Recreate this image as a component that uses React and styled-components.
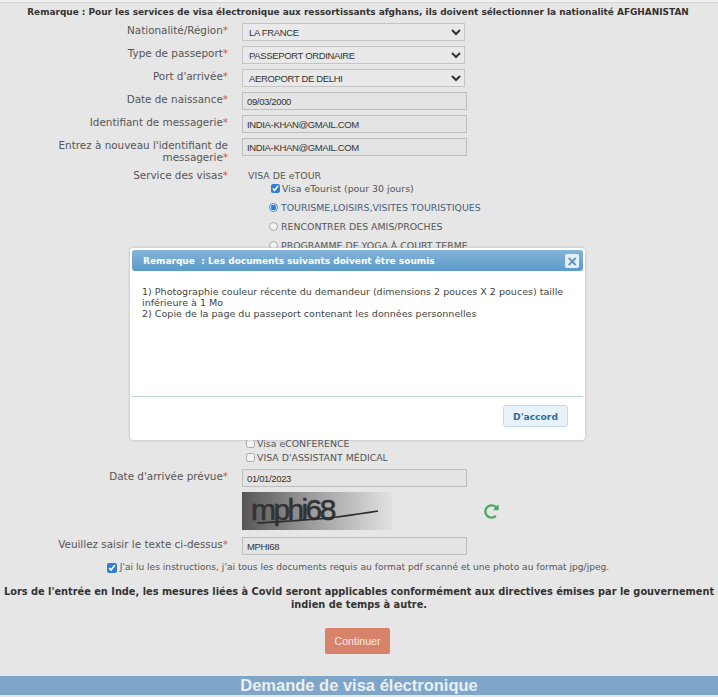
import React from "react";
import styled, { createGlobalStyle } from "styled-components";
import { FaRedoAlt } from "react-icons/fa";

const GlobalStyle = createGlobalStyle`
	html, body {
		margin: 0;
		padding: 0;
		background: #e6e6e6;
	}
	* {
		box-sizing: border-box;
	}
`;

const rows = [
	{ label: "Nationalité/Région", type: "select", value: "LA FRANCE" },
	{ label: "Type de passeport", type: "select", value: "PASSEPORT ORDINAIRE" },
	{ label: "Port d'arrivée", type: "select", value: "AEROPORT DE DELHI" },
	{ label: "Date de naissance", type: "input", value: "09/03/2000" },
	{ label: "Identifiant de messagerie", type: "input", value: "INDIA-KHAN@GMAIL.COM" },
	{ label: "Entrez à nouveau l'identifiant de messagerie", type: "input", value: "INDIA-KHAN@GMAIL.COM" },
];

const Field = ({ row }) => (
	<Row>
		<Label>
			{row.label}
			<Star>*</Star>
		</Label>
		{row.type === "select" ? (
			<Select defaultValue={row.value}>
				<option>{row.value}</option>
			</Select>
		) : (
			<Input defaultValue={row.value} />
		)}
	</Row>
);

const App = () => {
	return (
		<Page>
			<GlobalStyle />
			<TopLine />
			<Notice>
				Remarque : Pour les services de visa électronique aux ressortissants afghans, ils doivent sélectionner la
				nationalité AFGHANISTAN
			</Notice>
			<Fields>
				{rows.map((row) => (
					<Field key={row.label} row={row} />
				))}
			</Fields>
			<ServiceRow>
				<Label>
					Service des visas<Star>*</Star>
				</Label>
				<ServiceBody>
					<ServiceTitle>VISA DE eTOUR</ServiceTitle>
					<CheckLine>
						<input type="checkbox" defaultChecked />
						Visa eTourist (pour 30 jours)
					</CheckLine>
					<RadioLine $active>
						<input type="radio" name="purpose" defaultChecked />
						TOURISME,LOISIRS,VISITES TOURISTIQUES
					</RadioLine>
					<RadioLine>
						<input type="radio" name="purpose" />
						RENCONTRER DES AMIS/PROCHES
					</RadioLine>
					<RadioLine>
						<input type="radio" name="purpose" />
						PROGRAMME DE YOGA À COURT TERME
					</RadioLine>
					<HiddenOptions />
					<OtherVisa>
						<input type="checkbox" />
						Visa eCONFERENCE
					</OtherVisa>
					<OtherVisa>
						<input type="checkbox" />
						VISA D'ASSISTANT MÉDICAL
					</OtherVisa>
				</ServiceBody>
			</ServiceRow>
			<DateRow>
				<Label>
					Date d'arrivée prévue<Star>*</Star>
				</Label>
				<Input defaultValue="01/01/2023" />
			</DateRow>
			<CaptchaRow>
				<Captcha>
					<CaptchaText>mphi68</CaptchaText>
					<CaptchaStrike viewBox="0 0 150 38">
						<path d="M15 31 C45 29 72 28 95 25 C110 23 124 21 136 19" fill="none" stroke="#2c2c2c" strokeWidth="1.7" />
					</CaptchaStrike>
				</Captcha>
				<Refresh>
					<FaRedoAlt />
				</Refresh>
			</CaptchaRow>
			<Row>
				<Label>
					Veuillez saisir le texte ci-dessus<Star>*</Star>
				</Label>
				<Input defaultValue="MPHI68" />
			</Row>
			<Agree>
				<input type="checkbox" defaultChecked />
				J'ai lu les instructions, j'ai tous les documents requis au format pdf scanné et une photo au format jpg/jpeg.
			</Agree>
			<Covid>
				Lors de l'entrée en Inde, les mesures liées à Covid seront applicables conformément aux directives émises par le
				gouvernement indien de temps à autre.
			</Covid>
			<Actions>
				<Continue>Continuer</Continue>
			</Actions>
			<Banner>Demande de visa électronique</Banner>

			<Modal>
				<ModalHead>
					<ModalTitle>Remarque  : Les documents suivants doivent être soumis</ModalTitle>
					<Close>×</Close>
				</ModalHead>
				<ModalBody>
					1) Photographie couleur récente du demandeur (dimensions 2 pouces X 2 pouces) taille inférieure à 1 Mo
					<br />
					2) Copie de la page du passeport contenant les données personnelles
				</ModalBody>
				<ModalFoot>
					<Okay>D'accord</Okay>
				</ModalFoot>
			</Modal>
		</Page>
	);
};

const Page = styled.div`
	position: relative;
	width: 718px;
	height: 697px;
	overflow: hidden;
	background: #e6e6e6;
	border-top: 2px solid #f2f2f2;
	font-family: "DejaVu Sans", Verdana, sans-serif;
	font-size: 10px;
	color: #555;
`;

const TopLine = styled.div`
	height: 1px;
	background: #d4d4d4;
`;

const Notice = styled.div`
	text-align: center;
	font-weight: 700;
	font-size: 8.95px;
	line-height: 12px;
	color: #333;
	padding: 3px 2px 5px 0;
`;

const Fields = styled.div`
	display: flex;
	flex-direction: column;
	gap: 5px;
`;

const Row = styled.div`
	display: flex;
	align-items: flex-start;
	gap: 14px;
`;

const Label = styled.label`
	flex: 0 0 228px;
	text-align: right;
	font-size: 10.4px;
	line-height: 12px;
	padding-top: 1px;
	padding-left: 50px;
`;

const Star = styled.span`
	color: #d9534f;
`;

const Select = styled.select`
	width: 223px;
	height: 18px;
	padding: 0 0 0 2px;
	border: 1px solid #c4c4c4;
	background-color: #e9e9e9;
	font-family: "Liberation Sans", Arial, sans-serif;
	font-size: 9.5px;
	letter-spacing: -0.35px;
	color: #333;
`;

const Input = styled.input`
	width: 225px;
	height: 18px;
	padding: 0 4px;
	border: 1px solid #bdbdbd;
	background: #e4e4e4;
	font-family: "Liberation Sans", Arial, sans-serif;
	font-size: 9.5px;
	letter-spacing: -0.35px;
	color: #333;
`;

const ServiceRow = styled(Row)`
	margin-top: 5px;
`;

const ServiceBody = styled.div`
	display: flex;
	flex-direction: column;
	padding-left: 3px;
	font-size: 9.4px;
`;

const ServiceTitle = styled.div`
	line-height: 12px;
	padding: 2px 0 0 3px;
`;

const CheckLine = styled.label`
	display: flex;
	align-items: center;
	gap: 2px;
	height: 13px;
	margin: 0 0 3px 26px;
	input {
		margin: 0;
		width: 9px;
		height: 9px;
		accent-color: #2f7fd6;
	}
`;

const RadioLine = styled.label`
	display: flex;
	align-items: center;
	gap: 3px;
	height: 19px;
	margin-left: 24px;
	color: ${(p) => (p.$active ? "#46607a" : "#555")};
	input {
		margin: 0;
		width: 9px;
		height: 9px;
		accent-color: #2f7fd6;
		opacity: ${(p) => (p.$active ? 1 : 0.55)};
	}
`;

const HiddenOptions = styled.div`
	height: 181px;
`;

const OtherVisa = styled.label`
	display: flex;
	align-items: center;
	gap: 2px;
	height: 14px;
	margin-left: 1px;
	input {
		margin: 0;
		width: 9px;
		height: 9px;
		opacity: 0.55;
	}
`;

const DateRow = styled(Row)`
	margin-top: 5px;
`;

const CaptchaRow = styled.div`
	display: flex;
	align-items: center;
	gap: 92px;
	margin: 5px 0 7px 242px;
`;

const Captcha = styled.div`
	position: relative;
	width: 150px;
	height: 38px;
	overflow: hidden;
	background: linear-gradient(90deg, #565656, #9a9a9a 45%, #e2e2e2);
`;

const CaptchaText = styled.span`
	display: block;
	padding: 3px 0 0 9px;
	font-family: "Liberation Sans", Arial, sans-serif;
	font-size: 30px;
	line-height: 30px;
	letter-spacing: -2.6px;
	color: #333;
	-webkit-text-stroke: 0.6px #333;
`;

const CaptchaStrike = styled.svg`
	position: absolute;
	inset: 0;
	width: 150px;
	height: 38px;
`;

const Refresh = styled.span`
	display: flex;
	color: #4fa862;
	font-size: 15px;
`;

const Agree = styled.label`
	display: flex;
	align-items: center;
	justify-content: center;
	gap: 3px;
	margin: 6px 0 0 -2px;
	font-size: 9.1px;
	line-height: 13px;
	input {
		margin: 0;
		width: 10px;
		height: 10px;
		accent-color: #2f7fd6;
	}
`;

const Covid = styled.p`
	margin: 11px 0 0;
	text-align: center;
	font-weight: 700;
	font-size: 9.8px;
	line-height: 13px;
	color: #333;
`;

const Actions = styled.div`
	display: flex;
	justify-content: center;
	margin-top: 17px;
	padding-right: 3px;
`;

const Continue = styled.button`
	width: 65px;
	height: 26px;
	padding: 0;
	border: none;
	border-radius: 2px;
	background: #d9826a;
	color: #f6ece8;
	font-family: "Liberation Sans", Arial, sans-serif;
	font-size: 10.6px;
`;

const Banner = styled.div`
	margin-top: 22px;
	height: 19px;
	background: #7fa5c9;
	color: #e9eff5;
	text-align: center;
	font-family: "Liberation Sans", Arial, sans-serif;
	font-weight: 700;
	font-size: 16.5px;
	line-height: 19px;
`;

const Modal = styled.div`
	position: absolute;
	top: 246px;
	left: 130px;
	width: 455px;
	height: 192px;
	display: flex;
	flex-direction: column;
	padding: 2px;
	background: #fff;
	border-radius: 3px;
	box-shadow: 0 0 3px rgba(120, 140, 160, 0.5);
`;

const ModalHead = styled.div`
	display: flex;
	align-items: center;
	justify-content: space-between;
	height: 21px;
	padding: 0 4px 0 11px;
	border-radius: 3px;
	background: linear-gradient(180deg, #84b3d9, #5b9ccb);
`;

const ModalTitle = styled.span`
	color: #fff;
	font-weight: 700;
	font-size: 9px;
	white-space: pre;
`;

const Close = styled.span`
	width: 14px;
	height: 14px;
	border-radius: 2px;
	background: #e6eff7;
	color: #5f8fb5;
	text-align: center;
	font-weight: 700;
	font-size: 14px;
	line-height: 14px;
`;

const ModalBody = styled.div`
	flex: 1;
	padding: 15px 8px 0 10px;
	font-size: 9.55px;
	line-height: 11px;
	color: #444;
	border-bottom: 1px solid #bcd0de;
`;

const ModalFoot = styled.div`
	display: flex;
	justify-content: flex-end;
	height: 41px;
	padding: 8px 15px 0 0;
`;

const Okay = styled.button`
	width: 65px;
	height: 22px;
	padding: 0;
	border: 1px solid #c5dbec;
	border-radius: 3px;
	background: #e8f2fa;
	color: #2e6e9e;
	font-family: "DejaVu Sans", Verdana, sans-serif;
	font-weight: 700;
	font-size: 9.2px;
`;

export default App;
